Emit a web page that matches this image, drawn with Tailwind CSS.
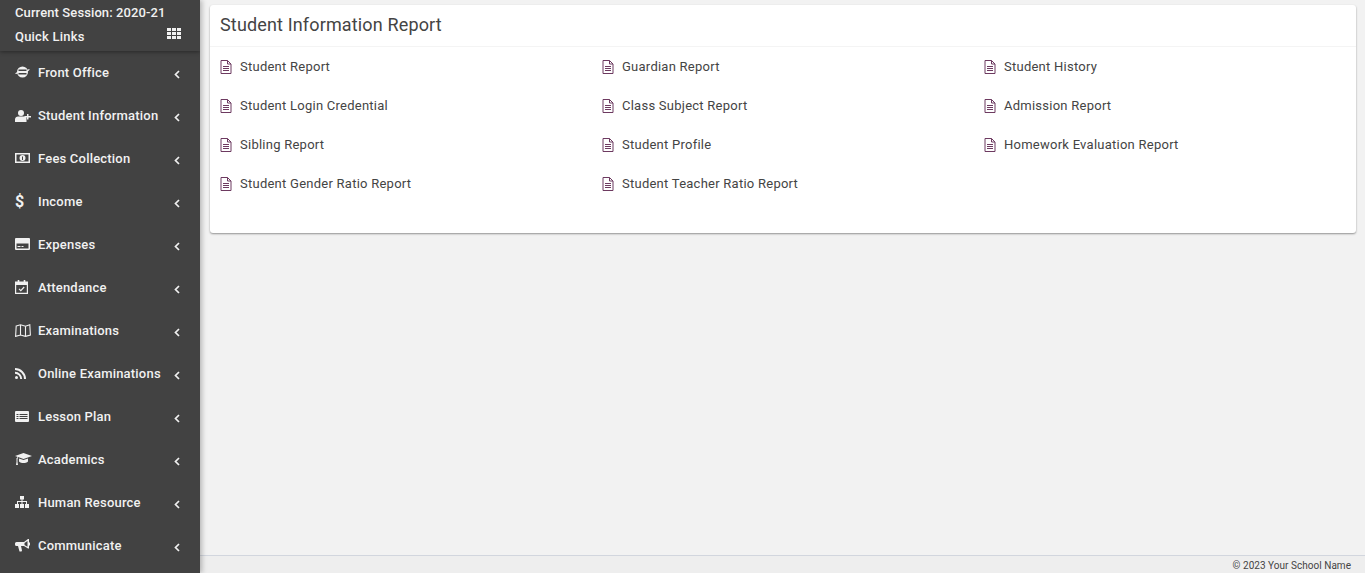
<!DOCTYPE html>
<html lang="en">
<head>
  <meta charset="UTF-8" />
  <title>Student Information Report</title>
  <script src="https://cdn.jsdelivr.net/npm/@tailwindcss/browser@4"></script>
</head>
<body class="h-[573px] overflow-hidden flex bg-[#f2f2f2] font-['Roboto',sans-serif]">

  <!-- sidebar -->
  <aside class="relative z-10 w-[200px] h-[573px] shrink-0 overflow-hidden bg-[#424242] text-[#f1f1f1] text-[13px] font-medium tracking-[0.2px] shadow-[2px_0_5px_rgba(0,0,0,0.25)]">
    <div class="h-[51px] pl-[15px] pr-[19px] shadow-[0_1px_4px_rgba(0,0,0,0.4)]">
      <div class="h-[26px] leading-[25px] whitespace-nowrap tracking-[0.1px]">Current Session: 2020-21</div>
      <div class="flex items-center justify-between h-[21px]">
        <span>Quick Links</span>
        <svg class="w-[14px] h-[11px] mb-[7px]" viewBox="0 0 14 11" fill="currentColor"><path d="M0 0h4v3H0zM5 0h4v3H5zM10 0h4v3h-4zM0 4h4v3H0zM5 4h4v3H5zM10 4h4v3h-4zM0 8h4v3H0zM5 8h4v3H5zM10 8h4v3h-4z"/></svg>
      </div>
    </div>

    <nav>
      <a class="flex items-center h-[43px] pl-[15px]">
        <svg class="w-[15px] h-[12px] mr-[8px] mb-[1px]" viewBox="0 0 15 12" fill="currentColor"><path fill-rule="evenodd" d="M7.500 .5a5.500 5.500 0 1 1 0 11 5.500 5.500 0 0 1 0-11zM3.500 3.500V5h8V3.500zM3.500 7v1.500h8V7z"/><path d="M0 7.500 2.500 5.800l.3 1.500L1.300 8zM15 3.500l-2.500 2.200-.5-1.500 1.200-.9z"/></svg>
        <span class="w-[136px] whitespace-nowrap">Front Office</span>
        <svg class="w-[6px] h-[9px] mt-[3px]" viewBox="0 0 6 9" fill="none" stroke="currentColor" stroke-width="1.700"><path d="M5 1 1.500 4.500 5 8"/></svg>
      </a>
      <a class="flex items-center h-[43px] pl-[15px]">
        <svg class="w-[16px] h-[12px] mr-[7px]" viewBox="0 0 16 12" fill="currentColor"><circle cx="6" cy="3" r="3"/><path d="M0 12V9.500C0 7.500 1.500 6.500 3 6.500h6c1 0 2 .5 2.500 1.500V12zM12 4h1.500v2H16v1.500h-2.500v2H12v-2H9.500V6H12z"/></svg>
        <span class="w-[136px] whitespace-nowrap">Student Information</span>
        <svg class="w-[6px] h-[9px] mt-[3px]" viewBox="0 0 6 9" fill="none" stroke="currentColor" stroke-width="1.700"><path d="M5 1 1.500 4.500 5 8"/></svg>
      </a>
      <a class="flex items-center h-[43px] pl-[15px]">
        <svg class="w-[15px] h-[10px] mr-[8px] mb-[1px]" viewBox="0 0 15 10" fill="currentColor"><path fill-rule="evenodd" d="M0 0h15v10H0zM1.500 1.500v7h12v-7zM7.500 2a3 3 0 1 1 0 6 3 3 0 0 1 0-6zM7 3.500V7h1V3.500z"/></svg>
        <span class="w-[136px] whitespace-nowrap">Fees Collection</span>
        <svg class="w-[6px] h-[9px] mt-[3px]" viewBox="0 0 6 9" fill="none" stroke="currentColor" stroke-width="1.700"><path d="M5 1 1.500 4.500 5 8"/></svg>
      </a>
      <a class="flex items-center h-[43px] pl-[15px]">
        <span class="w-[23px] text-[16px] font-bold leading-none tracking-normal">$</span>
        <span class="w-[136px] whitespace-nowrap">Income</span>
        <svg class="w-[6px] h-[9px] mt-[3px]" viewBox="0 0 6 9" fill="none" stroke="currentColor" stroke-width="1.700"><path d="M5 1 1.500 4.500 5 8"/></svg>
      </a>
      <a class="flex items-center h-[43px] pl-[15px]">
        <svg class="w-[15px] h-[12px] mr-[8px] mb-[1px]" viewBox="0 0 15 12" fill="currentColor"><path fill-rule="evenodd" d="M1 0h13a1 1 0 0 1 1 1v10a1 1 0 0 1-1 1H1a1 1 0 0 1-1-1V1a1 1 0 0 1 1-1zM1.500 5.500v5h12v-5zM2.500 8h3v1h-3zM6.500 8h2v1h-2z"/></svg>
        <span class="w-[136px] whitespace-nowrap">Expenses</span>
        <svg class="w-[6px] h-[9px] mt-[3px]" viewBox="0 0 6 9" fill="none" stroke="currentColor" stroke-width="1.700"><path d="M5 1 1.500 4.500 5 8"/></svg>
      </a>
      <a class="flex items-center h-[43px] pl-[15px]">
        <svg class="w-[13px] h-[14px] mr-[10px] mb-[1px]" viewBox="0 0 13 14" fill="none" stroke="currentColor" stroke-width="1.200"><path d="M.6 2.500h11.800v10.900H.6z"/><path d="M.6 2h11.800v2.500H.6z" fill="currentColor"/><path d="M3.500 0v3M9.500 0v3" stroke-width="1.600"/><path d="m4 8.800 1.800 1.800L9.200 7"/></svg>
        <span class="w-[136px] whitespace-nowrap">Attendance</span>
        <svg class="w-[6px] h-[9px] mt-[3px]" viewBox="0 0 6 9" fill="none" stroke="currentColor" stroke-width="1.700"><path d="M5 1 1.500 4.500 5 8"/></svg>
      </a>
      <a class="flex items-center h-[43px] pl-[15px]">
        <svg class="w-[16px] h-[13px] mr-[7px] mb-[1px]" viewBox="0 0 16 13" fill="none" stroke="currentColor" stroke-width="1.100"><path d="M1.200 2 5.500.8l5 1.400L14.800.8l.6 10.200-4.900 1.400-5-1.400L.6 12.400zM5.500.8v10.800M10.500 2.200v10.200"/></svg>
        <span class="w-[136px] whitespace-nowrap">Examinations</span>
        <svg class="w-[6px] h-[9px] mt-[3px]" viewBox="0 0 6 9" fill="none" stroke="currentColor" stroke-width="1.700"><path d="M5 1 1.500 4.500 5 8"/></svg>
      </a>
      <a class="flex items-center h-[43px] pl-[15px]">
        <svg class="w-[11px] h-[11px] mr-[12px]" viewBox="0 0 11 11" fill="none" stroke="currentColor" stroke-width="2"><circle cx="1.500" cy="9.500" r="1.500" fill="currentColor" stroke="none"/><path d="M0 4.800A6.200 6.200 0 0 1 6.200 11M0 1a10 10 0 0 1 10 10"/></svg>
        <span class="w-[136px] whitespace-nowrap">Online Examinations</span>
        <svg class="w-[6px] h-[9px] mt-[3px]" viewBox="0 0 6 9" fill="none" stroke="currentColor" stroke-width="1.700"><path d="M5 1 1.500 4.500 5 8"/></svg>
      </a>
      <a class="flex items-center h-[43px] pl-[15px]">
        <svg class="w-[14px] h-[11px] mr-[9px] mb-[1px]" viewBox="0 0 14 11" fill="currentColor"><path fill-rule="evenodd" d="M1 0h12a1 1 0 0 1 1 1v9a1 1 0 0 1-1 1H1a1 1 0 0 1-1-1V1a1 1 0 0 1 1-1zM1.500 3v1h2V3zM4.500 3v1h8V3zM1.500 5v1h2V5zM4.500 5v1h8V5zM1.500 7v1h2V7zM4.500 7v1h8V7z"/></svg>
        <span class="w-[136px] whitespace-nowrap">Lesson Plan</span>
        <svg class="w-[6px] h-[9px] mt-[3px]" viewBox="0 0 6 9" fill="none" stroke="currentColor" stroke-width="1.700"><path d="M5 1 1.500 4.500 5 8"/></svg>
      </a>
      <a class="flex items-center h-[43px] pl-[15px]">
        <svg class="w-[17px] h-[12px] mr-[6px] mb-[1px]" viewBox="0 0 17 12" fill="currentColor"><path d="M8.500 0 17 3l-8.500 3L3 4v1.500l-.7 0V3.700L0 3zM4 5.500l4.500 1.500L13 5.500V8.500C12 9.800 10 10 8.500 10S5 9.800 4 8.500zM1.500 5h1v4l.5 3H1l.5-3z"/></svg>
        <span class="w-[136px] whitespace-nowrap">Academics</span>
        <svg class="w-[6px] h-[9px] mt-[3px]" viewBox="0 0 6 9" fill="none" stroke="currentColor" stroke-width="1.700"><path d="M5 1 1.500 4.500 5 8"/></svg>
      </a>
      <a class="flex items-center h-[43px] pl-[15px]">
        <svg class="w-[14px] h-[12px] mr-[9px] mb-[1px]" viewBox="0 0 14 12" fill="currentColor"><path d="M5 0h4v3.500H7.500V5H12v3h2v4h-4V8h1V6H7.500v2H9v4H5V8h1.500V6H3v2h1v4H0V8h2V5h4.500V3.500H5z"/></svg>
        <span class="w-[136px] whitespace-nowrap">Human Resource</span>
        <svg class="w-[6px] h-[9px] mt-[3px]" viewBox="0 0 6 9" fill="none" stroke="currentColor" stroke-width="1.700"><path d="M5 1 1.500 4.500 5 8"/></svg>
      </a>
      <a class="flex items-center h-[43px] pl-[15px]">
        <svg class="w-[15px] h-[13px] mr-[8px] mb-[1px]" viewBox="0 0 15 13" fill="currentColor"><path fill-rule="evenodd" d="M13 0h1v9.500h-1L9 7H6l1 4.500-.5 1H4.500L3 7H1.500A1.500 1.500 0 0 1 0 5.500v-1A1.500 1.500 0 0 1 1.500 3H9zM12.500 2 9.500 4v2l3 1.800zM14 3.500h1v3h-1z"/></svg>
        <span class="w-[136px] whitespace-nowrap">Communicate</span>
        <svg class="w-[6px] h-[9px] mt-[3px]" viewBox="0 0 6 9" fill="none" stroke="currentColor" stroke-width="1.700"><path d="M5 1 1.500 4.500 5 8"/></svg>
      </a>
    </nav>
  </aside>

  <!-- main -->
  <div class="flex-1 flex flex-col h-[573px] min-w-0">
    <main class="flex-1 pt-[5px] pl-[10px] pr-[9px]">
      <section class="h-[228px] bg-white rounded-[3px] shadow-[0_1px_2px_rgba(0,0,0,0.4)] text-[#444]">
        <h1 class="h-[42px] leading-[40px] pl-[10px] text-[18px] tracking-[0.15px] text-[#444] border-b border-[#f4f4f4]">Student Information Report</h1>
        <div class="grid grid-cols-[382px_382px_1fr] pl-[9px] text-[13px] tracking-[0.25px]">
          <a class="flex items-center h-[39px]"><svg class="w-[12px] h-[14px] ml-[1px] mr-[8px] text-[#6d3a60]" viewBox="0 0 12 14" fill="none" stroke="currentColor" stroke-width="1"><path d="M1 .5h6.500L11 4v9.500H1zM7.500.5V4H11M3 6.500h6M3 8.500h6M3 10.500h6"/></svg>Student Report</a>
          <a class="flex items-center h-[39px]"><svg class="w-[12px] h-[14px] ml-[1px] mr-[8px] text-[#6d3a60]" viewBox="0 0 12 14" fill="none" stroke="currentColor" stroke-width="1"><path d="M1 .5h6.500L11 4v9.500H1zM7.500.5V4H11M3 6.500h6M3 8.500h6M3 10.500h6"/></svg>Guardian Report</a>
          <a class="flex items-center h-[39px]"><svg class="w-[12px] h-[14px] ml-[1px] mr-[8px] text-[#6d3a60]" viewBox="0 0 12 14" fill="none" stroke="currentColor" stroke-width="1"><path d="M1 .5h6.500L11 4v9.500H1zM7.500.5V4H11M3 6.500h6M3 8.500h6M3 10.500h6"/></svg>Student History</a>
          <a class="flex items-center h-[39px]"><svg class="w-[12px] h-[14px] ml-[1px] mr-[8px] text-[#6d3a60]" viewBox="0 0 12 14" fill="none" stroke="currentColor" stroke-width="1"><path d="M1 .5h6.500L11 4v9.500H1zM7.500.5V4H11M3 6.500h6M3 8.500h6M3 10.500h6"/></svg>Student Login Credential</a>
          <a class="flex items-center h-[39px]"><svg class="w-[12px] h-[14px] ml-[1px] mr-[8px] text-[#6d3a60]" viewBox="0 0 12 14" fill="none" stroke="currentColor" stroke-width="1"><path d="M1 .5h6.500L11 4v9.500H1zM7.500.5V4H11M3 6.500h6M3 8.500h6M3 10.500h6"/></svg>Class Subject Report</a>
          <a class="flex items-center h-[39px]"><svg class="w-[12px] h-[14px] ml-[1px] mr-[8px] text-[#6d3a60]" viewBox="0 0 12 14" fill="none" stroke="currentColor" stroke-width="1"><path d="M1 .5h6.500L11 4v9.500H1zM7.500.5V4H11M3 6.500h6M3 8.500h6M3 10.500h6"/></svg>Admission Report</a>
          <a class="flex items-center h-[39px]"><svg class="w-[12px] h-[14px] ml-[1px] mr-[8px] text-[#6d3a60]" viewBox="0 0 12 14" fill="none" stroke="currentColor" stroke-width="1"><path d="M1 .5h6.500L11 4v9.500H1zM7.500.5V4H11M3 6.500h6M3 8.500h6M3 10.500h6"/></svg>Sibling Report</a>
          <a class="flex items-center h-[39px]"><svg class="w-[12px] h-[14px] ml-[1px] mr-[8px] text-[#6d3a60]" viewBox="0 0 12 14" fill="none" stroke="currentColor" stroke-width="1"><path d="M1 .5h6.500L11 4v9.500H1zM7.500.5V4H11M3 6.500h6M3 8.500h6M3 10.500h6"/></svg>Student Profile</a>
          <a class="flex items-center h-[39px]"><svg class="w-[12px] h-[14px] ml-[1px] mr-[8px] text-[#6d3a60]" viewBox="0 0 12 14" fill="none" stroke="currentColor" stroke-width="1"><path d="M1 .5h6.500L11 4v9.500H1zM7.500.5V4H11M3 6.500h6M3 8.500h6M3 10.500h6"/></svg>Homework Evaluation Report</a>
          <a class="flex items-center h-[39px]"><svg class="w-[12px] h-[14px] ml-[1px] mr-[8px] text-[#6d3a60]" viewBox="0 0 12 14" fill="none" stroke="currentColor" stroke-width="1"><path d="M1 .5h6.500L11 4v9.500H1zM7.500.5V4H11M3 6.500h6M3 8.500h6M3 10.500h6"/></svg>Student Gender Ratio Report</a>
          <a class="flex items-center h-[39px]"><svg class="w-[12px] h-[14px] ml-[1px] mr-[8px] text-[#6d3a60]" viewBox="0 0 12 14" fill="none" stroke="currentColor" stroke-width="1"><path d="M1 .5h6.500L11 4v9.500H1zM7.500.5V4H11M3 6.500h6M3 8.500h6M3 10.500h6"/></svg>Student Teacher Ratio Report</a>
        </div>
      </section>
    </main>
    <footer class="h-[18px] bg-[#eeeeee] border-t border-[#d2d6de] text-[10px] leading-[19px] tracking-[0.03px] text-[#444] text-right pr-[14px]">© 2023 Your School Name</footer>
  </div>
</body>
</html>
